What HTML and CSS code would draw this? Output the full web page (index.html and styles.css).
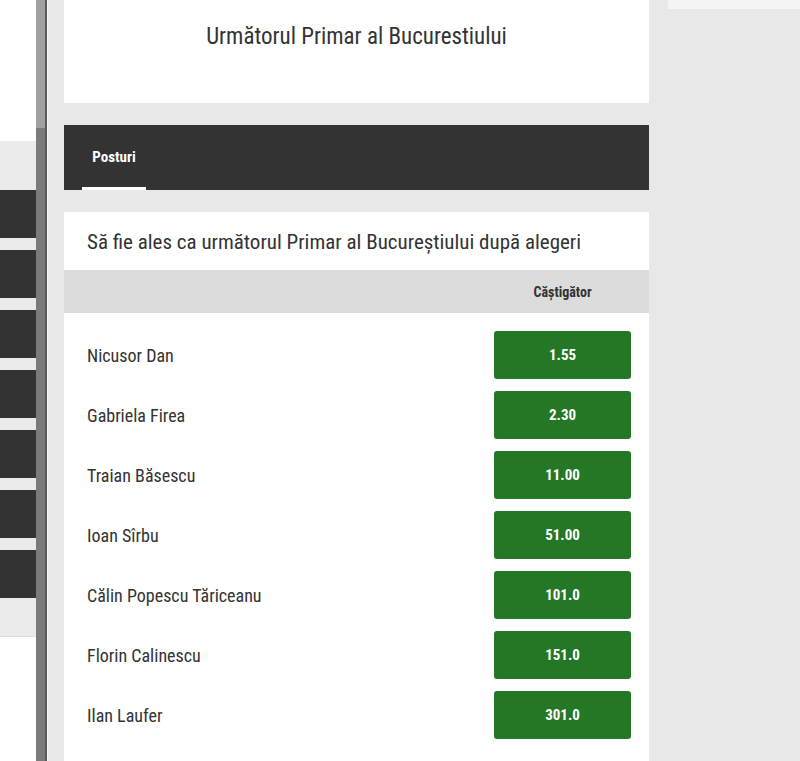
FILE: index.html
```html
<!DOCTYPE html>
<html lang="ro">
<head>
<meta charset="utf-8">
<title>Următorul Primar al Bucurestiului</title>
<link rel="stylesheet" href="styles.css">
</head>
<body>
<div class="page">
  <aside class="side">
    <div class="side-top"></div>
    <div class="side-menu">
      <div class="side-item"></div>
      <div class="side-item"></div>
      <div class="side-item"></div>
      <div class="side-item"></div>
      <div class="side-item"></div>
      <div class="side-item"></div>
      <div class="side-item"></div>
    </div>
    <div class="side-bottom"></div>
  </aside>
  <div class="scrollbar">
    <div class="scroll-track"></div>
    <div class="scroll-thumb"></div>
  </div>
  <main class="main">
    <section class="title-card">
      <h1 class="title">Următorul Primar al Bucurestiului</h1>
    </section>
    <nav class="tabs">
      <span class="tab active">Posturi</span>
    </nav>
    <section class="market">
      <h2 class="market-title">Să fie ales ca următorul Primar al Bucureștiului după alegeri</h2>
      <div class="market-head">
        <span class="col-label">Căştigător</span>
      </div>
      <ul class="rows">
        <li class="row"><span class="name">Nicusor Dan</span><button class="odd">1.55</button></li>
        <li class="row"><span class="name">Gabriela Firea</span><button class="odd">2.30</button></li>
        <li class="row"><span class="name">Traian Băsescu</span><button class="odd">11.00</button></li>
        <li class="row"><span class="name">Ioan Sîrbu</span><button class="odd">51.00</button></li>
        <li class="row"><span class="name">Călin Popescu Tăriceanu</span><button class="odd">101.0</button></li>
        <li class="row"><span class="name">Florin Calinescu</span><button class="odd">151.0</button></li>
        <li class="row"><span class="name">Ilan Laufer</span><button class="odd">301.0</button></li>
      </ul>
    </section>
  </main>
  <aside class="right">
    <div class="right-top"></div>
  </aside>
</div>
</body>
</html>
```

FILE: styles.css
```css
* { box-sizing: border-box; }
html, body {
  margin: 0;
  padding: 0;
  height: 100%;
  overflow: hidden;
}
body {
  background: #e8e8e8;
  font-family: "Roboto Condensed", "Liberation Sans Narrow", Roboto, sans-serif;
  color: #333;
}
.page {
  display: flex;
  height: 761px;
}
.side {
  width: 36px;
  flex: none;
  background: #fff;
  display: flex;
  flex-direction: column;
}
.side-top {
  height: 141px;
  background: #fff;
}
.side-menu {
  background: #ebebeb;
  padding: 49px 0 0;
  display: flex;
  flex-direction: column;
  gap: 12px;
}
.side-item {
  height: 48px;
  background: #333;
}
.side-bottom {
  height: 39px;
  background: #ebebeb;
  border-bottom: 1px solid #ddd;
}
.scrollbar {
  width: 11px;
  flex: none;
  display: flex;
  flex-direction: column;
  background: #7b7b7b;
  border-right: 2px solid #5a5a5a;
  box-shadow: 1px 0 0 #f4f4f4;
}
.scroll-track {
  height: 128px;
  background: #a0a0a0;
}
.scroll-thumb {
  flex: 1;
}
.main {
  width: 585px;
  flex: none;
  margin-left: 17px;
  display: flex;
  flex-direction: column;
}
.title-card {
  background: #fff;
  height: 103px;
  display: flex;
  justify-content: center;
  padding-top: 21px;
}
.title {
  margin: 0;
  font-size: 23px;
  font-weight: 400;
  color: #333;
  line-height: 32px;
}
.tabs {
  margin-top: 22px;
  height: 65px;
  background: #333;
  display: flex;
  padding-left: 18px;
}
.tab {
  color: #fff;
  font-size: 15px;
  font-weight: 700;
  padding: 23px 0 0;
  width: 64px;
  text-align: center;
  border-bottom: 3px solid transparent;
}
.tab.active {
  border-bottom-color: #fff;
}
.market {
  margin-top: 22px;
  background: #fff;
  flex: 1;
}
.market-title {
  margin: 0;
  height: 58px;
  padding: 16px 23px 0;
  font-size: 21px;
  font-weight: 400;
  line-height: 28px;
  color: #333;
}
.market-head {
  height: 43px;
  background: #dcdcdc;
  display: flex;
  justify-content: flex-end;
  align-items: center;
  padding-right: 18px;
}
.col-label {
  width: 137px;
  text-align: center;
  font-size: 14px;
  font-weight: 700;
  color: #333;
}
.rows {
  list-style: none;
  margin: 0;
  padding: 12px 18px 0 23px;
}
.row {
  height: 60px;
  display: flex;
  align-items: center;
  justify-content: space-between;
}
.name {
  font-size: 18px;
  color: #333;
}
.odd {
  width: 137px;
  height: 48px;
  border: 0;
  border-radius: 3px;
  background: #247825;
  color: #fff;
  font-family: "Roboto Condensed", "Liberation Sans Narrow", Roboto, sans-serif;
  font-size: 15px;
  font-weight: 700;
  padding: 0;
}
.right {
  flex: 1;
  margin-left: 19px;
}
.right-top {
  height: 9px;
  background: #f4f4f4;
}
```
